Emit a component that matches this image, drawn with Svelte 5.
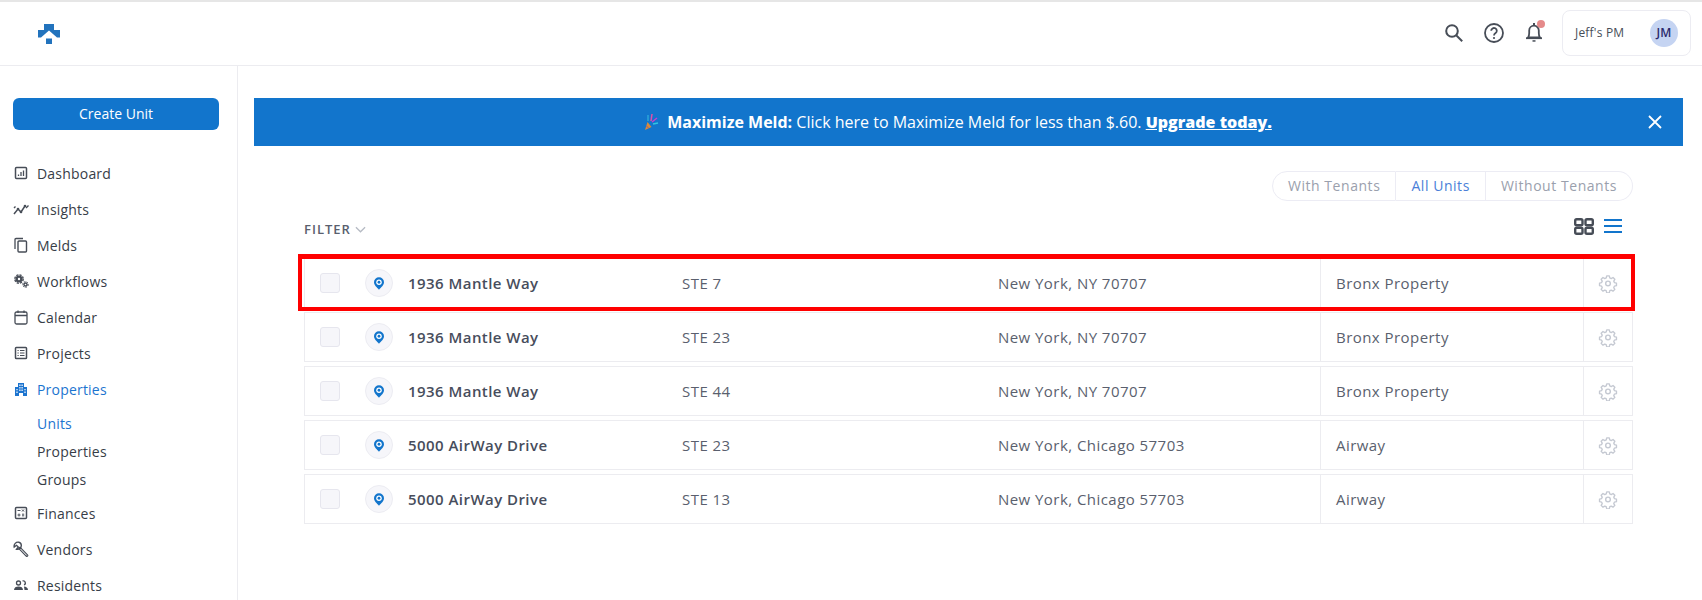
<script lang="ts">
  const nav = [
    { label: 'Dashboard', icon: 'dashboard' },
    { label: 'Insights', icon: 'insights' },
    { label: 'Melds', icon: 'melds' },
    { label: 'Workflows', icon: 'workflows' },
    { label: 'Calendar', icon: 'calendar' },
    { label: 'Projects', icon: 'projects' },
    { label: 'Properties', icon: 'properties', active: true, children: ['Units', 'Properties', 'Groups'] },
    { label: 'Finances', icon: 'finances' },
    { label: 'Vendors', icon: 'vendors' },
    { label: 'Residents', icon: 'residents' },
  ];

  const units = [
    { address: '1936 Mantle Way', suite: 'STE 7', city: 'New York, NY 70707', property: 'Bronx Property' },
    { address: '1936 Mantle Way', suite: 'STE 23', city: 'New York, NY 70707', property: 'Bronx Property' },
    { address: '1936 Mantle Way', suite: 'STE 44', city: 'New York, NY 70707', property: 'Bronx Property' },
    { address: '5000 AirWay Drive', suite: 'STE 23', city: 'New York, Chicago 57703', property: 'Airway' },
    { address: '5000 AirWay Drive', suite: 'STE 13', city: 'New York, Chicago 57703', property: 'Airway' },
  ];
</script>

<div class="page">
  <header class="topbar">
    <svg class="logo" viewBox="0 0 22 20" width="22" height="20" aria-label="Logo">
      <path d="M6 0h10v6h6v7.500h-3L11 6.500 3 13.500H0V6h6z" fill="#2273bd" />
      <rect x="8" y="14.500" width="6" height="5.500" fill="#2273bd" />
    </svg>
    <div class="top-actions">
      <svg class="search" viewBox="0 0 18 18" width="18" height="18">
        <circle cx="7" cy="7" r="5.800" fill="none" stroke="#474d57" stroke-width="2" />
        <path d="M11.200 11.200l6 6" stroke="#474d57" stroke-width="2" />
      </svg>
      <svg class="help" viewBox="0 0 20 20" width="20" height="20">
        <circle cx="10" cy="10" r="9" fill="none" stroke="#474d57" stroke-width="1.800" />
        <path d="M7.200 7.800a2.800 2.800 0 1 1 4.400 2.300c-1 .7-1.600 1.200-1.600 2.400" fill="none" stroke="#474d57" stroke-width="1.800" />
        <circle cx="10" cy="15" r="1.100" fill="#474d57" />
      </svg>
      <div class="bell">
        <svg viewBox="0 0 16 19" width="16" height="19">
          <path d="M2 14.500c.9-1 1.200-2.200 1.200-4.500V7.500a4.800 4.800 0 0 1 9.600 0V10c0 2.300.3 3.500 1.200 4.500z" fill="none" stroke="#474d57" stroke-width="1.800" />
          <path d="M0 15.200h16" stroke="#474d57" stroke-width="1.800" />
          <path d="M6.500 17.200h3v1.500h-3z" fill="#474d57" />
          <path d="M7 0h2v3H7z" fill="#474d57" />
        </svg>
        <span class="dot"></span>
      </div>
      <div class="account">
        <span class="account-name">Jeff's PM</span>
        <span class="avatar">JM</span>
      </div>
    </div>
  </header>

  <div class="body">
    <aside class="sidebar">
      <button class="create">Create Unit</button>
      <nav>
        {#each nav as item}
          <div class="nav-item" class:active={item.active}>
            <svg viewBox="0 0 16 16" width="16" height="16" class="nav-icon">
              {#if item.icon === 'dashboard'}
                <rect x="2.500" y="2.500" width="11" height="11" rx="1" fill="none" stroke="currentColor" stroke-width="1.500" />
                <path d="M5.500 11V9.500M8 11V7M10.500 11V5.500" stroke="currentColor" stroke-width="1.300" />
              {:else if item.icon === 'insights'}
                <path d="M1 13l4-5 3 3 4-6" fill="none" stroke="currentColor" stroke-width="1.500" />
                <circle cx="5" cy="8" r="1.300" fill="currentColor" />
                <circle cx="8" cy="11" r="1.300" fill="currentColor" />
                <circle cx="12" cy="5" r="1.300" fill="currentColor" />
                <path d="M13 7l2.500-2.500M1 7l1.500-1.500" stroke="currentColor" stroke-width="1.400" />
              {:else if item.icon === 'melds'}
                <path d="M2 12V2.500a1 1 0 0 1 1-1h7" fill="none" stroke="currentColor" stroke-width="1.300" />
                <rect x="5" y="4" width="8.500" height="11" rx="1" fill="none" stroke="currentColor" stroke-width="1.400" />
              {:else if item.icon === 'workflows'}
                <circle cx="6" cy="6" r="3.600" fill="currentColor" />
                <circle cx="6" cy="6" r="4.200" fill="none" stroke="currentColor" stroke-width="1.400" stroke-dasharray="2.200 1.100" />
                <circle cx="6" cy="6" r="1.200" fill="#fff" />
                <circle cx="12.500" cy="11.500" r="2.200" fill="currentColor" />
                <circle cx="12.500" cy="11.500" r="2.800" fill="none" stroke="currentColor" stroke-width="1" stroke-dasharray="1.600 1.200" />
                <circle cx="12.500" cy="11.500" r=".8" fill="#fff" />
              {:else if item.icon === 'calendar'}
                <rect x="2" y="3" width="12" height="12" rx="1.500" fill="none" stroke="currentColor" stroke-width="1.300" />
                <path d="M2 6.500h12M5 1.500v2.500M11 1.500v2.500" stroke="currentColor" stroke-width="1.300" />
              {:else if item.icon === 'projects'}
                <rect x="2.500" y="2.500" width="11" height="11" rx=".8" fill="none" stroke="currentColor" stroke-width="1.500" />
                <path d="M4.500 5.500h1.200M7 5.500h4.500M4.500 8h1.200M7 8h4.500M4.500 10.500h1.200M7 10.500h4.500" stroke="currentColor" stroke-width="1.200" />
              {:else if item.icon === 'properties'}
                <path fill-rule="evenodd" d="M5 2h6v4h3v9h-4v-3H6v3H2V6h3zm1.300 1.500v1.400h1.200V3.500zm2.200 0v1.400h1.200V3.500zM6.300 6v1.400h1.200V6zm2.200 0v1.400h1.200V6zM3.400 8v1.300h1.200V8zm2.900.6V10h1.200V8.600zm2.200 0V10h1.200V8.600zM11.400 8v1.300h1.200V8zm-8 2.600v1.300h1.200v-1.300zm8 0v1.300h1.200v-1.300z" fill="currentColor" />
              {:else if item.icon === 'finances'}
                <rect x="2.500" y="2.500" width="11" height="11" rx="1" fill="none" stroke="currentColor" stroke-width="1.500" />
                <path d="M4.500 5.500h3M9 4.500l2 2M11 4.500l-2 2M4.500 10h3M6 8.500v3M9 9.200h2.200M9 10.800h2.200" stroke="currentColor" stroke-width="1" />
              {:else if item.icon === 'vendors'}
                <path d="M6.800 7.300l7 7.200" stroke="currentColor" stroke-width="3" stroke-linecap="round" />
                <path d="M7.500 8l6.300 6.500" stroke="#fff" stroke-width="1" />
                <path d="M5.800 1.200A4 4 0 0 0 1.200 6l2.300-1.700L5.300 6 3.500 8.300A4 4 0 0 0 8.300 4.200a3.300 3.300 0 0 0-2.500-3z" fill="none" stroke="currentColor" stroke-width="1.400" />
              {:else if item.icon === 'residents'}
                <circle cx="5.500" cy="6" r="2" fill="none" stroke="currentColor" stroke-width="1.300" />
                <path d="M9.500 4a2 2 0 0 1 1.500 3.800" fill="none" stroke="currentColor" stroke-width="1.300" />
                <path d="M1 13c0-2.500 2-3.500 4.500-3.500S10 10.500 10 13z" fill="currentColor" />
                <path d="M11 9.500c2 .2 4 1 4 3.500h-3.500" fill="currentColor" />
              {/if}
            </svg>
            <span>{item.label}</span>
          </div>
          {#if item.children}
            <div class="subnav">
              {#each item.children as child, i}
                <div class="sub-item" class:active={i === 0}>{child}</div>
              {/each}
            </div>
          {/if}
        {/each}
      </nav>
    </aside>

    <main class="content">
      <div class="banner">
        <div class="banner-text">
          <svg viewBox="0 0 16 18" width="16" height="18" class="popper">
            <path d="M2 17l2.500-8 4 5z" fill="#d98b3a" />
            <path d="M3.300 13l2.400 2" stroke="#8a5a8f" stroke-width="1" />
            <path d="M5 2v6" stroke="#2aa6d8" stroke-width="1.500" />
            <path d="M9 1l-1 7" stroke="#e04fa8" stroke-width="1.500" />
            <path d="M9 9l5-4" stroke="#c73fd0" stroke-width="1.500" />
            <path d="M10 11l5-1" stroke="#31c4e0" stroke-width="1.300" />
          </svg>
          <strong>Maximize Meld:</strong> Click here to Maximize Meld for less than $.60. <strong class="upgrade">Upgrade today.</strong>
        </div>
        <svg class="close" viewBox="0 0 14 14" width="14" height="14">
          <path d="M1 1l12 12M13 1L1 13" stroke="#fff" stroke-width="1.800" />
        </svg>
      </div>

      <div class="list-area">
        <div class="segments">
          <div class="segment first">With Tenants</div>
          <div class="segment on">All Units</div>
          <div class="segment last">Without Tenants</div>
        </div>

        <div class="list-head">
          <div class="filter">FILTER
            <svg viewBox="0 0 12 7" width="11" height="7"><path d="M1 1l5 5 5-5" fill="none" stroke="#b6bbc4" stroke-width="1.400" /></svg>
          </div>
          <div class="views">
            <svg viewBox="0 0 20 17" width="20" height="17">
              <rect x="1.200" y="1.200" width="7.300" height="6" rx="1.500" fill="none" stroke="#474d57" stroke-width="2.400" />
              <rect x="11.500" y="1.200" width="7.300" height="6" rx="1.500" fill="none" stroke="#474d57" stroke-width="2.400" />
              <rect x="1.200" y="9.800" width="7.300" height="6" rx="1.500" fill="none" stroke="#474d57" stroke-width="2.400" />
              <rect x="11.500" y="9.800" width="7.300" height="6" rx="1.500" fill="none" stroke="#474d57" stroke-width="2.400" />
            </svg>
            <svg viewBox="0 0 18 14" width="18" height="14">
              <path d="M0 1h18M0 7h18M0 13h18" stroke="#1275cc" stroke-width="2" />
            </svg>
          </div>
        </div>

        <div class="rows">
          {#each units as unit, i}
            <div class="row">
              {#if i === 0}<span class="highlight"></span>{/if}
              <div class="cell-check"><span class="checkbox"></span></div>
              <div class="cell-pin">
                <span class="pin">
                  <svg viewBox="0 0 12 15" width="10" height="13">
                    <path d="M6 0a6 6 0 0 1 6 6c0 3.500-3.500 6-6 9C3.500 12 0 9.500 0 6a6 6 0 0 1 6-6z" fill="#1275cc" />
                    <circle cx="6" cy="6" r="3.300" fill="#fff" />
                    <circle cx="6" cy="6" r="1.700" fill="#1275cc" />
                  </svg>
                </span>
              </div>
              <div class="cell-address">{unit.address}</div>
              <div class="cell-suite">{unit.suite}</div>
              <div class="cell-city">{unit.city}</div>
              <div class="cell-property">{unit.property}</div>
              <div class="cell-gear">
                <svg viewBox="0 0 24 24" width="20" height="20">
                  <path d="M10.300 2.500h3.400l.7 2.800 1.900.8 2.400-1.400 2.400 2.400-1.400 2.400.8 1.900 2.800.7v3.400l-2.800.7-.8 1.900 1.400 2.400-2.400 2.400-2.400-1.400-1.900.8-.7 2.800h-3.400l-.7-2.800-1.900-.8-2.400 1.400-2.400-2.400 1.400-2.400-.8-1.900-2.800-.7v-3.400l2.800-.7.800-1.900-1.400-2.400 2.400-2.400 2.400 1.400 1.900-.8z" transform="translate(1.200 1.200) scale(.9)" fill="none" stroke="#c5c9d2" stroke-width="1.800" stroke-linejoin="round" />
                  <circle cx="12" cy="12.500" r="2.800" fill="none" stroke="#c5c9d2" stroke-width="1.700" />
                </svg>
              </div>
            </div>
          {/each}
        </div>
      </div>
    </main>
  </div>
</div>

<style>
  :global(body) {
    margin: 0;
    background: #fff;
    font-family: 'Open Sans', sans-serif;
  }
  .page {
    height: 600px;
    overflow: hidden;
    display: flex;
    flex-direction: column;
    border-top: 2px solid #e6e6e6;
    box-sizing: border-box;
  }
  .topbar {
    height: 64px;
    flex-shrink: 0;
    box-sizing: border-box;
    border-bottom: 1px solid #ececf0;
    display: flex;
    align-items: center;
    justify-content: space-between;
    padding: 0 11px 2px 38px;
  }
  .logo {
    margin-top: 2px;
  }
  .top-actions {
    display: flex;
    align-items: center;
  }
  .search {
    margin-right: 21px;
  }
  .help {
    margin-right: 22px;
  }
  .bell {
    position: relative;
    width: 16px;
    height: 19px;
    margin-right: 20px;
  }
  .dot {
    position: absolute;
    top: -3px;
    right: -3px;
    width: 8px;
    height: 8px;
    border-radius: 50%;
    background: #e58a8a;
  }
  .account {
    width: 129px;
    height: 46px;
    box-sizing: border-box;
    border: 1px solid #ececf2;
    border-radius: 8px;
    display: flex;
    align-items: center;
    justify-content: space-between;
    padding: 0 12px;
    font-size: 12px;
    letter-spacing: .2px;
    color: #474d57;
  }
  .avatar {
    width: 28px;
    height: 28px;
    border-radius: 50%;
    background: #c5d4f2;
    color: #2a2a6e;
    font-weight: 600;
    font-size: 12px;
    display: flex;
    align-items: center;
    justify-content: center;
  }
  .body {
    flex: 1;
    display: flex;
    min-height: 0;
  }
  .sidebar {
    width: 238px;
    flex-shrink: 0;
    box-sizing: border-box;
    border-right: 1px solid #ececf0;
    padding: 32px 0 0 13px;
  }
  .create {
    display: block;
    width: 206px;
    height: 32px;
    border: 0;
    border-radius: 6px;
    background: #1275cc;
    color: #fff;
    font: 400 14px 'Open Sans', sans-serif;
    padding: 0 0 2px;
    margin-bottom: 25px;
  }
  .nav-item {
    height: 36px;
    display: flex;
    align-items: center;
    gap: 8px;
    font-size: 14px;
    font-weight: 500;
    letter-spacing: .2px;
    color: #373d47;
  }
  .nav-item.active {
    color: #1c74cf;
  }
  .nav-icon {
    color: #474d57;
    flex-shrink: 0;
  }
  .active .nav-icon {
    color: #1c74cf;
  }
  .subnav {
    padding: 3px 0 1px 24px;
  }
  .sub-item {
    height: 28px;
    line-height: 28px;
    font-size: 14px;
    font-weight: 500;
    letter-spacing: .2px;
    color: #373d47;
  }
  .sub-item.active {
    color: #1c74cf;
  }
  .content {
    flex: 1;
    min-width: 0;
    padding: 32px 19px 0 16px;
  }
  .banner {
    height: 48px;
    background: #1275cc;
    color: #fff;
    display: flex;
    align-items: center;
    justify-content: center;
    position: relative;
    font-size: 16px;
    padding-right: 22px;
  }
  .banner-text {
    display: flex;
    align-items: center;
    white-space: pre-wrap;
  }
  .popper {
    margin-right: 8px;
  }
  .upgrade {
    font-weight: 800;
    text-decoration: underline;
  }
  .close {
    position: absolute;
    right: 21px;
    top: 17px;
  }
  .list-area {
    padding: 25px 50px 0 50px;
  }
  .segments {
    display: flex;
    justify-content: flex-end;
    font-size: 14px;
    letter-spacing: .55px;
    color: #9aa0ad;
  }
  .segment {
    height: 30px;
    line-height: 28px;
    box-sizing: border-box;
    border: 1px solid #ececf4;
    border-left: 0;
    padding: 0 15px;
  }
  .segment.first {
    border-left: 1px solid #ececf4;
    border-radius: 15px 0 0 15px;
  }
  .segment.on {
    color: #4a7fd8;
  }
  .segment.last {
    border-radius: 0 15px 15px 0;
  }
  .list-head {
    display: flex;
    align-items: center;
    justify-content: space-between;
    margin-top: 15px;
    height: 26px;
    padding-right: 11px;
  }
  .filter {
    font-size: 13px;
    font-weight: 600;
    letter-spacing: 1px;
    color: #5a5f6e;
    display: flex;
    align-items: center;
    gap: 4px;
  }
  .views {
    display: flex;
    align-items: center;
    gap: 10px;
    margin-top: -6px;
  }
  .rows {
    margin-top: 16px;
    display: flex;
    flex-direction: column;
    gap: 4px;
  }
  .row {
    height: 50px;
    position: relative;
    box-sizing: border-box;
    border: 1px solid #ececf0;
    display: flex;
    align-items: center;
    font-size: 15px;
    letter-spacing: .45px;
    color: #5a5f6e;
  }
  .highlight {
    position: absolute;
    inset: -5px -3px -4px -7px;
    border-style: solid;
    border-color: #f00;
    border-width: 5px 4px 4px;
    pointer-events: none;
  }
  .cell-check {
    width: 60px;
    padding-left: 15px;
    box-sizing: border-box;
    display: flex;
  }
  .checkbox {
    width: 20px;
    height: 20px;
    box-sizing: border-box;
    border: 1px solid #e6e6ee;
    border-radius: 3px;
    background: #f6f6fa;
  }
  .cell-pin {
    width: 43px;
    display: flex;
  }
  .pin {
    width: 28px;
    height: 28px;
    box-sizing: border-box;
    border: 1px solid #ececf2;
    border-radius: 50%;
    background: #f6f6fa;
    display: flex;
    align-items: center;
    justify-content: center;
  }
  .cell-address {
    width: 274px;
    font-weight: 600;
    color: #474d5c;
  }
  .cell-suite {
    width: 316px;
  }
  .cell-city {
    width: 322px;
  }
  .cell-property {
    align-self: stretch;
    width: 264px;
    box-sizing: border-box;
    border-left: 1px solid #ececf0;
    border-right: 1px solid #ececf0;
    padding-left: 15px;
    display: flex;
    align-items: center;
  }
  .cell-gear {
    flex: 1;
    display: flex;
    justify-content: center;
  }
</style>
